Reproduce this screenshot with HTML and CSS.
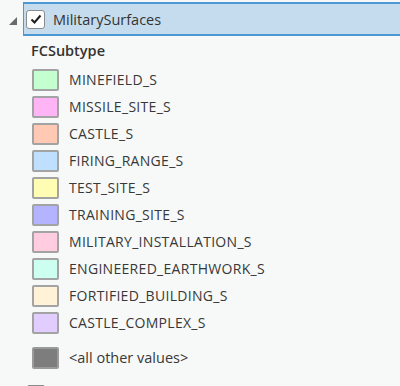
FILE: index.html
```html
<!DOCTYPE html>
<html lang="en">
<head>
  <meta charset="UTF-8">
  <title>Contents</title>
  <link rel="stylesheet" href="styles.css">
</head>
<body>
  <div class="layer">
    <span class="expander">
      <svg viewBox="0 0 8 8" width="8" height="8"><path d="M8 0V8H0Z" fill="#6b6b6b"/></svg>
    </span>
    <div class="layer-bar">
      <span class="check">
        <svg viewBox="0 0 14 14" width="14" height="14"><path d="M2.5 7.5l3 3 6-7" fill="none" stroke="#1e1e1e" stroke-width="2"/></svg>
      </span>
      <span class="layer-name">MilitarySurfaces</span>
    </div>
  </div>

  <div class="field">FCSubtype</div>

  <ul class="legend">
    <li><span class="swatch" style="background:#c4ffd0"></span>MINEFIELD_S</li>
    <li><span class="swatch" style="background:#ffb4f5"></span>MISSILE_SITE_S</li>
    <li><span class="swatch" style="background:#ffc9b3"></span>CASTLE_S</li>
    <li><span class="swatch" style="background:#bfdffe"></span>FIRING_RANGE_S</li>
    <li><span class="swatch" style="background:#fffcb4"></span>TEST_SITE_S</li>
    <li><span class="swatch" style="background:#b4b4fe"></span>TRAINING_SITE_S</li>
    <li><span class="swatch" style="background:#ffcce0"></span>MILITARY_INSTALLATION_S</li>
    <li><span class="swatch" style="background:#cdfff0"></span>ENGINEERED_EARTHWORK_S</li>
    <li><span class="swatch" style="background:#fff2d6"></span>FORTIFIED_BUILDING_S</li>
    <li><span class="swatch" style="background:#e1cdff"></span>CASTLE_COMPLEX_S</li>
    <li class="other"><span class="swatch" style="background:#7d7d7d"></span>&lt;all other values&gt;</li>
  </ul>

  <div class="next-layer">
    <span class="next-check"></span>
  </div>
</body>
</html>
```

FILE: styles.css
```css
body {
  margin: 0;
  background: #f7f8f8;
  font-family: 'Open Sans', 'Noto Sans', sans-serif;
  color: #333;
  height: 386px;
  overflow: hidden;
}
.layer {
  display: flex;
  align-items: center;
  margin-top: 2px;
}
.expander {
  width: 23px;
  display: flex;
  justify-content: flex-end;
  padding-right: 6px;
  box-sizing: border-box;
  padding-top: 4px;
}
.layer-bar {
  flex: 1;
  height: 30px;
  display: flex;
  align-items: center;
  background: #c5dcee;
  border: 2px solid #4c98d3;
  border-right: none;
  border-left-width: 1px;
  padding-left: 2px;
}
.check {
  width: 17px;
  height: 17px;
  border: 1px solid #8c8c8c;
  border-radius: 3px;
  background: #fff;
  display: flex;
  align-items: center;
  justify-content: center;
}
.layer-name {
  margin-left: 8px;
  font-size: 14.5px;
  color: #333;
}
.field {
  margin: 5px 0 0 31px;
  font-size: 14.5px;
  font-weight: 600;
  color: #333;
  line-height: 20px;
}
.legend {
  list-style: none;
  margin: 5px 0 0 32px;
  padding: 0;
}
.legend li {
  display: flex;
  align-items: center;
  height: 27px;
  font-size: 14px;
  letter-spacing: 0.3px;
  color: #383838;
}
.swatch {
  width: 23px;
  height: 18px;
  border: 2px solid #a3a3a3;
  border-radius: 2px;
  margin-right: 10px;
}
.legend li.other {
  margin-top: 8px;
  font-size: 14.5px;
  letter-spacing: 0;
}
.legend li.other .swatch {
  border-color: #9a9a9a;
}
.next-layer {
  margin: 14px 0 0 27px;
}
.next-check {
  display: block;
  width: 16px;
  height: 16px;
  border: 1px solid #8c8c8c;
  border-radius: 2px;
  background: #fff;
}
```
